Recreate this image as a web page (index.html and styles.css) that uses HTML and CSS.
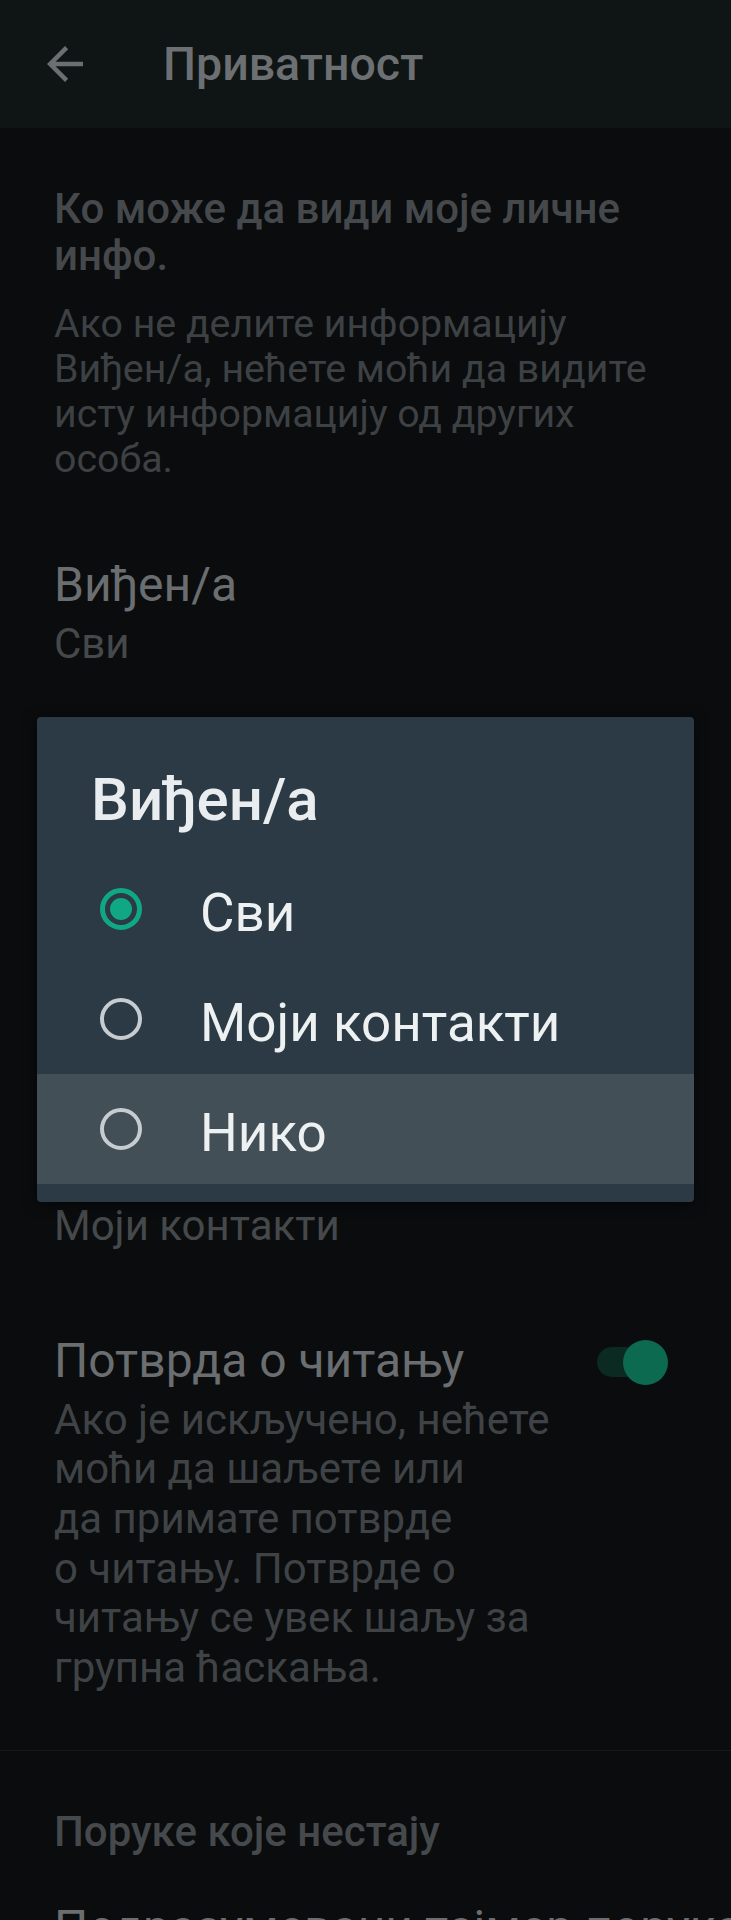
FILE: index.html
```html
<!DOCTYPE html>
<html lang="sr">
<head>
<meta charset="utf-8">
<title>Приватност</title>
<link rel="stylesheet" href="styles.css">
</head>
<body>
<header class="appbar">
  <svg class="back" viewBox="0 0 24 24" aria-hidden="true"><path d="M20 11H7.83l5.59-5.59L12 4l-8 8 8 8 1.41-1.41L7.83 13H20v-2z"/></svg>
  <h1 class="appbar-title">Приватност</h1>
</header>
<main class="content">
  <section class="intro">
    <h2 class="section-heading">Ко може да види моје личне<br>инфо.</h2>
    <p class="section-desc">Ако не делите информацију<br>Виђен/а, нећете моћи да видите<br>исту информацију од других<br>особа.</p>
  </section>
  <div class="pref">
    <div class="pref-title">Виђен/а</div>
    <div class="pref-sub">Сви</div>
  </div>
  <div class="pref">
    <div class="pref-title">Слика профила</div>
    <div class="pref-sub">Моји контакти</div>
  </div>
  <div class="pref">
    <div class="pref-title">О мени</div>
    <div class="pref-sub">Сви</div>
  </div>
  <div class="pref">
    <div class="pref-title">Статус</div>
    <div class="pref-sub">Моји контакти</div>
  </div>
  <div class="pref pref-switch">
    <div class="pref-text">
      <div class="pref-title">Потврда о читању</div>
      <p class="pref-desc">Ако је искључено, нећете<br>моћи да шаљете или<br>да примате потврде<br>о читању. Потврде о<br>читању се увек шаљу за<br>групна ћаскања.</p>
    </div>
    <div class="switch"><span class="switch-thumb"></span></div>
  </div>
  <hr class="divider">
  <section class="group">
    <h2 class="section-heading heading-lg">Поруке које нестају</h2>
    <div class="pref-title group-first">Подразумевани тајмер порука</div>
  </section>
</main>
<div class="dialog" role="dialog">
  <h3 class="dialog-title">Виђен/а</h3>
  <div class="option">
    <span class="radio checked"></span>
    <span class="option-label">Сви</span>
  </div>
  <div class="option">
    <span class="radio"></span>
    <span class="option-label">Моји контакти</span>
  </div>
  <div class="option active">
    <span class="radio"></span>
    <span class="option-label">Нико</span>
  </div>
</div>
</body>
</html>
```
FILE: styles.css
```css
html, body {
  margin: 0;
  padding: 0;
}
body {
  background: #0a0c0e;
  font-family: Roboto, "Noto Sans", "DejaVu Sans", sans-serif;
  width: 731px;
  height: 1920px;
  overflow: hidden;
  position: relative;
}
.appbar {
  height: 128px;
  background: #0f1415;
  display: flex;
  align-items: center;
  padding-left: 38px;
  box-sizing: border-box;
}
.back {
  width: 54px;
  height: 54px;
  fill: #6b6f71;
  flex: none;
}
.appbar-title {
  margin: 0 0 0 71px;
  font-size: 46.5px;
  font-weight: 500;
  color: #6d7072;
  line-height: 56px;
}
.intro {
  padding: 57.1px 54px 32.8px;
}
.section-heading {
  margin: 0;
  font-size: 42px;
  font-weight: 500;
  line-height: 47px;
  color: #45494c;
  white-space: nowrap;
}
.section-desc {
  margin: 22.7px 0 0;
  font-size: 39.3px;
  line-height: 45px;
  color: #3d4144;
  white-space: nowrap;
}
.pref {
  padding: 42px 54px;
}
.pref-title {
  font-size: 48px;
  line-height: 56px;
  color: #6b6e70;
  white-space: nowrap;
}
.pref-sub {
  margin-top: 8px;
  font-size: 42px;
  line-height: 46px;
  color: #45494b;
}
.pref-switch {
  display: flex;
  justify-content: space-between;
  align-items: flex-start;
  padding: 42px 63px 57.6px 54px;
}
.pref-desc {
  margin: 6.2px 0 0;
  font-size: 42px;
  line-height: 49.6px;
  color: #3f4346;
  white-space: nowrap;
}
.switch {
  position: relative;
  flex: none;
  width: 71px;
  height: 45px;
  margin-top: 7px;
}
.switch::before {
  content: "";
  position: absolute;
  left: 0;
  top: 7.5px;
  width: 62px;
  height: 30px;
  border-radius: 15px;
  background: #0a2a22;
}
.switch-thumb {
  position: absolute;
  right: 0;
  top: 0;
  width: 45px;
  height: 45px;
  border-radius: 50%;
  background: #0b6a50;
}
.divider {
  margin: 0;
  border: 0;
  height: 1px;
  background: #16191c;
}
.group {
  padding: 55.6px 54px 0;
}
.heading-lg {
  line-height: 50px;
}
.group-first {
  margin-top: 43px;
}
.dialog {
  position: absolute;
  top: 717px;
  left: 37px;
  width: 657px;
  height: 485px;
  box-sizing: border-box;
  padding: 50.5px 0 18px;
  background: #2b3a44;
  border-radius: 4px;
  box-shadow: 0 2px 14px rgba(0, 0, 0, 0.55);
}
.dialog-title {
  margin: 0 0 22.5px;
  padding-left: 54px;
  font-size: 60px;
  font-weight: 500;
  line-height: 64px;
  color: #e9edef;
}
.option {
  display: flex;
  align-items: center;
  height: 110px;
  padding-left: 63px;
  gap: 58px;
}
.option.active {
  background: #434f57;
}
.radio {
  flex: none;
  width: 42px;
  height: 42px;
  box-sizing: border-box;
  border: 4px solid #c7ccd0;
  border-radius: 50%;
}
.radio.checked {
  border: 5px solid #10a884;
  display: flex;
  align-items: center;
  justify-content: center;
}
.radio.checked::after {
  content: "";
  width: 22px;
  height: 22px;
  border-radius: 50%;
  background: #10a884;
}
.option-label {
  font-size: 53px;
  line-height: 60px;
  padding-top: 8px;
  color: #eef1f2;
}
```
